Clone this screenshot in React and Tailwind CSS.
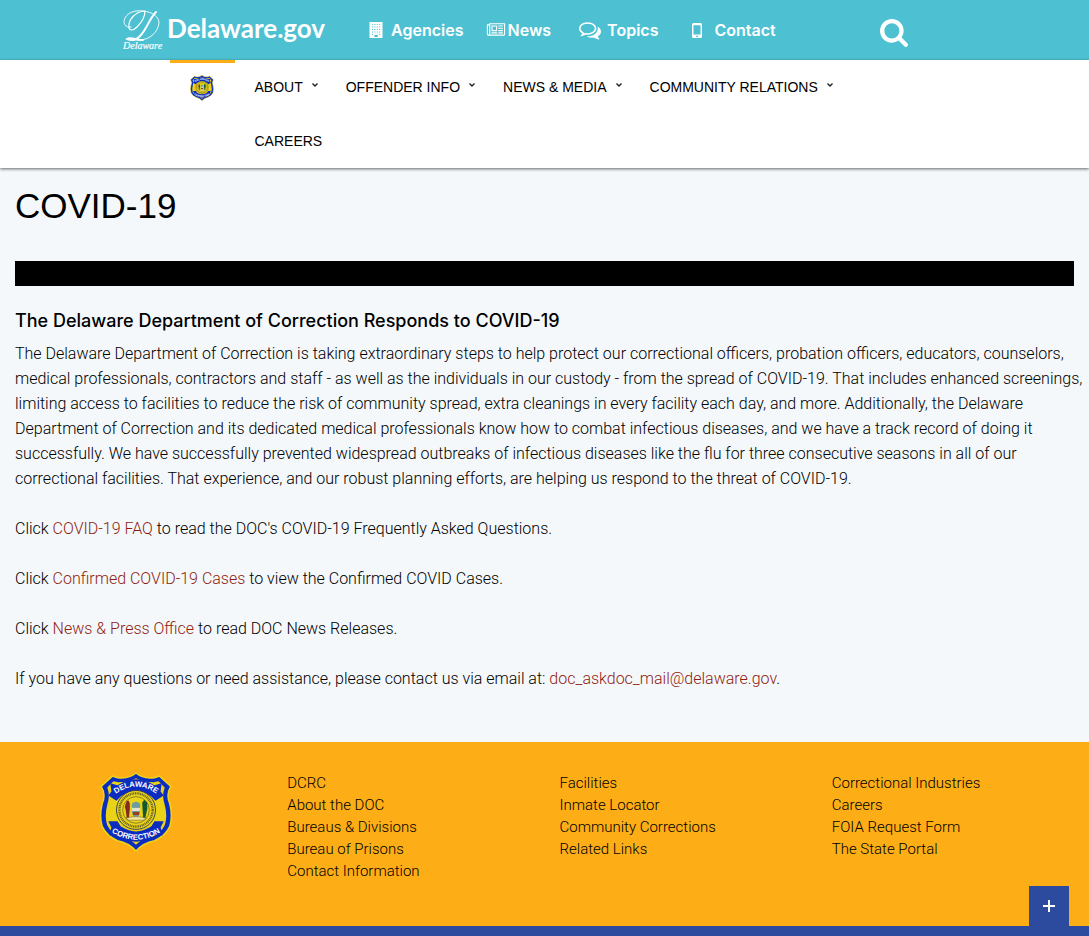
import React from "react";

const topLinks = [
  { label: "Agencies", icon: BuildingIcon, box: "w-[22px]", gap: "mr-[22px]" },
  { label: "News", icon: NewspaperIcon, box: "w-[22px]", gap: "mr-7" },
  { label: "Topics", icon: CommentsIcon, box: "w-7", gap: "mr-[34px]" },
  { label: "Contact", icon: MobileIcon, box: "w-[22px]", gap: "" },
];

const menu = [
  { label: "ABOUT", sub: true },
  { label: "OFFENDER INFO", sub: true },
  { label: "NEWS & MEDIA", sub: true },
  { label: "COMMUNITY RELATIONS", sub: true },
  { label: "CAREERS", sub: false },
];

const footerColumns = [
  ["DCRC", "About the DOC", "Bureaus & Divisions", "Bureau of Prisons", "Contact Information"],
  ["Facilities", "Inmate Locator", "Community Corrections", "Related Links"],
  ["Correctional Industries", "Careers", "FOIA Request Form", "The State Portal"],
];

function BuildingIcon() {
  return (
    <svg viewBox="0 0 14 16" className="h-4 w-3.5" fill="currentColor" aria-hidden="true">
      <path
        fillRule="evenodd"
        d="M.5 0h13v16H.5zM3 2v1h1V2zm2.400 0v1h1V2zm2.400 0v1h1V2zM10.200 2v1h1V2zM3 4.500v1h1v-1zm2.400 0v1h1v-1zm2.400 0v1h1v-1zm2.400 0v1h1v-1zM3 7v1h1V7zm2.400 0v1h1V7zm2.400 0v1h1V7zm2.400 0v1h1V7zM3 9.500v1h1v-1zm2.400 0v1h1v-1zm2.400 0v1h1v-1zm2.400 0v1h1v-1zM3 12v1h1v-1zm7.200 0v1h1v-1zM5.400 13v2h3.400v-2z"
      />
    </svg>
  );
}

function NewspaperIcon() {
  return (
    <svg viewBox="0 0 2048 1792" className="h-4 w-5" fill="currentColor" aria-hidden="true">
      <path d="M1024 512h-384v384h384v-384zm128 640v128h-640v-128h640zm0-768v640h-640v-640h640zm640 768v128h-512v-128h512zm0-256v128h-512v-128h512zm0-256v128h-512v-128h512zm0-256v128h-512v-128h512zm-1536 960v-960h-128v960q0 26 19 45t45 19 45-19 19-45zm1664 0v-1088h-1536v1088q0 33-11 64h1483q26 0 45-19t19-45zm128-1216v1216q0 80-56 136t-136 56h-1664q-80 0-136-56t-56-136v-1088h256v-128h1792z" />
    </svg>
  );
}

function CommentsIcon() {
  return (
    <svg viewBox="0 0 1792 1792" className="h-[22px] w-[22px]" fill="currentColor" aria-hidden="true">
      <path d="M704 384q-153 0-286 52t-211.5 141-78.5 191q0 82 53 158t149 132l97 56-35 84q34-20 62-39l44-31 53 10q78 14 153 14 153 0 286-52t211.5-141 78.5-191-78.5-191-211.5-141-286-52zm0-128q191 0 353.5 68.5t256.5 186.5 94 257-94 257-256.5 186.5-353.5 68.5q-86 0-176-16-124 88-278 128-36 9-86 16h-3q-11 0-20.5-8t-11.5-21q-1-3-1-6.5t.5-6.5 2-6l2.5-5 3.5-5.5 4-5 4.5-5 4-4.5q5-6 23-25t26-29.5 22.5-29 25-38.5 20.5-44q-124-72-195-177t-71-224q0-139 94-257t256.5-186.5 353.5-68.5zm822 1169q10 24 20.5 44t25 38.5 22.5 29 26 29.5 23 25q1 1 4 4.5t4.5 5 4 5 3.5 5.5l2.5 5 2 6 .5 6.5-1 6.5q-3 14-13 22t-22 7q-50-7-86-16-154-40-278-128-90 16-176 16-271 0-472-132 58 4 88 4 161 0 309-45t264-129q125-92 192-212t67-254q0-77-23-152 129 71 204 178t75 230q0 120-71 224.5t-195 176.5z" />
    </svg>
  );
}

function MobileIcon() {
  return (
    <svg viewBox="0 0 10 15" className="h-[15px] w-2.5" fill="currentColor" aria-hidden="true">
      <path
        fillRule="evenodd"
        d="M1.500 0h7Q10 0 10 1.500v12Q10 15 8.500 15h-7Q0 15 0 13.500v-12Q0 0 1.500 0zM1.500 2.200v9.300h7V2.200zM5 12.400a.9.900 0 1 0 0 1.800.9.900 0 0 0 0-1.800z"
      />
    </svg>
  );
}

function SearchIcon() {
  return (
    <svg viewBox="0 0 1664 1664" className="h-7 w-7" fill="currentColor" aria-hidden="true">
      <path
        transform="translate(-64 -128)"
        d="M1216 832q0-185-131.5-316.5t-316.5-131.5-316.5 131.5-131.5 316.5 131.5 316.5 316.5 131.5 316.5-131.5 131.5-316.5zm512 832q0 52-38 90t-90 38q-54 0-90-38l-343-342q-179 124-399 124-143 0-273.5-55.5t-225-150-150-225-55.5-273.5 55.500-273.500 150-225 225-150 273.500-55.500 273.500 55.500 225 150 150 225 55.500 273.500q0 220-124 399l343 343q37 37 37 90z"
      />
    </svg>
  );
}

function StateMark() {
  return (
    <svg viewBox="0 0 40 42" className="h-[42px] w-10" fill="none" stroke="white" strokeLinecap="round" aria-hidden="true">
      <path strokeWidth="0.9" d="M8 18C2 19-.5 14 2 9 5 3 13 1 20 2c10 1 16 6 16 12-1 9-9 17-20 17-6 0-10-1-12-1" />
      <path strokeWidth="1.200" d="M21 2C12 3 5 11 6 18c0 4 4 4 8 0 5-5 8-10 8-16" />
      <path strokeWidth="1.900" d="M33 3C26 10 24 20 17 27c-4 4-9 5-13 3 4-3 10 2 16 1" />
      <text x="0" y="40" fill="white" stroke="white" strokeWidth="0.200" fontSize="10" fontStyle="italic" fontFamily="'Liberation Serif', serif">Delaware</text>
    </svg>
  );
}

function Badge({ className, id }) {
  return (
    <svg viewBox="0 0 72 78" className={className} role="img" aria-label="Delaware Department of Correction">
      <path
        d="M36 1Q29 7 18 5.500L13 4 2 14Q7 22 3 31 0 43 3 53 7 62 18 67 29 69 36 77 43 69 54 67 65 62 69 53 72 43 69 31 65 22 70 14L59 4 54 5.500Q43 7 36 1Z"
        fill="#0b2cc0" stroke="#efd417" strokeWidth="1.500"
      />
      <path
        d="M36 6Q29 10 19 10L14 9 8 15Q11 23 8 32 5 43 8 52 12 60 20 63 30 65 36 71 42 65 52 63 60 60 64 52 67 43 64 32 61 23 64 15L58 9 53 10Q43 10 36 6Z"
        fill="#ead316"
      />
      <path d="M11 11l7 2Q36 1 54 13l7-2-1 8 3 4-8 5-4-4Q36 13 21 24l-4 4-8-5 3-4Z" fill="#0b2cc0" />
      <path d="M9 48l9 0 3 5q15 10 30 0l3-5 9 0-3 6 2 8-8-1Q36 75 18 61l-8 1 2-8Z" fill="#0b2cc0" />
      <circle cx="36" cy="37" r="19" fill="#ead316" stroke="#343b55" strokeWidth="0.900" />
      <circle cx="36" cy="37" r="16.200" fill="none" stroke="#625d28" strokeWidth="2.300" strokeDasharray="1 .7" />
      <circle cx="36" cy="37" r="13" fill="#ead316" stroke="#545332" strokeWidth="0.600" />
      <path d="M32 31q4-4 8 0v6q0 6-4 8-4-2-4-8Z" fill="#6c9ba1" />
      <path d="M32 35h8v3h-8z" fill="#e4e4cb" />
      <path d="M33 39h6v3h-6z" fill="#9b3c24" />
      <path d="M27 28h2l1 3v5l-1 9h-2l-1-8-1-3Z" fill="#852c22" />
      <path d="M42 30l2-3 3 3v6l-2 9h-2z" fill="#14582e" />
      <path d="M26 45q10-3 20 0l-3 2H29Z" fill="#f4e39a" stroke="#665d24" strokeWidth="0.500" />
      <path id={id + "-top"} d="M12 24.500Q36 4 60 24.500" fill="none" />
      <path id={id + "-bottom"} d="M8 56Q36 76 64 56" fill="none" />
      <text fill="white" fontSize="7.500" fontWeight="700" fontFamily="'Liberation Sans', sans-serif" textAnchor="middle">
        <textPath href={"#" + id + "-top"} startOffset="50%">DELAWARE</textPath>
      </text>
      <text fill="white" fontSize="7.500" fontWeight="700" fontFamily="'Liberation Sans', sans-serif" textAnchor="middle">
        <textPath href={"#" + id + "-bottom"} startOffset="50%">CORRECTION</textPath>
      </text>
    </svg>
  );
}

function TextLink({ children }) {
  return <a href="#" className="text-[#8f1d10]">{children}</a>;
}

export default function App() {
  return (
    <div className="min-h-screen bg-[#f4f8fb] font-['Liberation_Sans',Arial,sans-serif] text-base text-black">
      <header>
        <div className="flex h-15 items-center bg-[#4dc1d2] pl-[11.3%] text-white">
          <a href="#" className="flex items-center gap-1">
            <StateMark />
            <span className="pb-1 font-['Lato',sans-serif] text-[26px] font-bold leading-8">Delaware.gov</span>
          </a>
          <nav aria-label="State" className="ml-11 flex items-center">
            {topLinks.map(({ label, icon: Icon, box, gap }) => (
              <a key={label} href="#" className={"flex items-center font-['Inter',sans-serif] font-semibold " + gap}>
                <span className={"flex shrink-0 " + box}><Icon /></span>
                {label}
              </a>
            ))}
          </nav>
          <button type="button" aria-label="Search" className="ml-[104px] mt-1.5"><SearchIcon /></button>
        </div>

        <div className="relative bg-white shadow-[0_1px_3px_rgba(0,0,0,0.6)]">
          <nav aria-label="Department" className="mx-auto flex w-full max-w-[750px]">
            <a href="#" className="flex h-13 w-[65px] shrink-0 items-center justify-center border-t-3 border-[#fdae17]">
              <Badge id="nav-badge" className="h-[26px] w-6" />
            </a>
            <ul className="flex flex-wrap">
              {menu.map(({ label, sub }) => (
                <li key={label}>
                  <a href="#" className="flex h-[54px] items-center pl-5 pr-2 text-sm">
                    {label}
                    {sub && (
                      <svg viewBox="0 0 6 4" className="mb-1 ml-[9px] h-1 w-1.5" fill="none" stroke="#222" strokeWidth="1.400" aria-hidden="true">
                        <path d="M.5.500 3 3 5.500.500" />
                      </svg>
                    )}
                  </a>
                </li>
              ))}
            </ul>
          </nav>
        </div>
      </header>

      <main className="px-[15px] pb-[51px] pt-[18px]">
        <h1 className="text-[35px] leading-10">COVID-19</h1>
        <div className="mt-[35px] h-[25px] bg-black" />
        <h2 className="mt-6 font-['Inter',sans-serif] text-lg font-medium leading-[22px]">The Delaware Department of Correction Responds to COVID-19</h2>
        <div className="-mr-3 mt-[9px] space-y-[25px] font-['Roboto',sans-serif] font-light leading-[25px]">
          <p>
            The Delaware Department of Correction is taking extraordinary steps to help protect our correctional officers, probation officers, educators, counselors,{" "}
            <br className="hidden lg:inline" />
            medical professionals, contractors and staff - as well as the individuals in our custody - from the spread of COVID-19. That includes enhanced screenings,{" "}
            <br className="hidden lg:inline" />
            limiting access to facilities to reduce the risk of community spread, extra cleanings in every facility each day, and more. Additionally, the Delaware{" "}
            <br className="hidden lg:inline" />
            Department of Correction and its dedicated medical professionals know how to combat infectious diseases, and we have a track record of doing it{" "}
            <br className="hidden lg:inline" />
            successfully. We have successfully prevented widespread outbreaks of infectious diseases like the flu for three consecutive seasons in all of our{" "}
            <br className="hidden lg:inline" />
            correctional facilities. That experience, and our robust planning efforts, are helping us respond to the threat of COVID-19.
          </p>
          <p>Click <TextLink>COVID-19 FAQ</TextLink> to read the DOC's COVID-19 Frequently Asked Questions.</p>
          <p>Click <TextLink>Confirmed COVID-19 Cases</TextLink> to view the Confirmed COVID Cases.</p>
          <p>Click <TextLink>News &amp; Press Office</TextLink> to read DOC News Releases.</p>
          <p>If you have any questions or need assistance, please contact us via email at: <TextLink>doc_askdoc_mail@delaware.gov</TextLink>.</p>
        </div>
      </main>

      <footer className="relative border-b-10 border-[#2c4b9e] bg-[#fdae17] pb-11 pt-[30px]">
        <div className="grid grid-cols-4">
          <div className="flex justify-center">
            <Badge id="footer-badge" className="h-20 w-[74px]" />
          </div>
          {footerColumns.map((links) => (
            <ul key={links[0]} className="pl-[15px] font-['Roboto',sans-serif] text-[15px] font-light leading-[22px]">
              {links.map((link) => (
                <li key={link}><a href="#">{link}</a></li>
              ))}
            </ul>
          ))}
        </div>
        <button type="button" aria-label="Expand" className="absolute bottom-0 right-5 flex h-10 w-10 items-center justify-center bg-[#2c4b9e]">
          <svg viewBox="0 0 12 12" className="h-3 w-3" stroke="white" strokeWidth="2" aria-hidden="true">
            <path d="M6 0v12M0 6h12" />
          </svg>
        </button>
      </footer>
    </div>
  );
}
